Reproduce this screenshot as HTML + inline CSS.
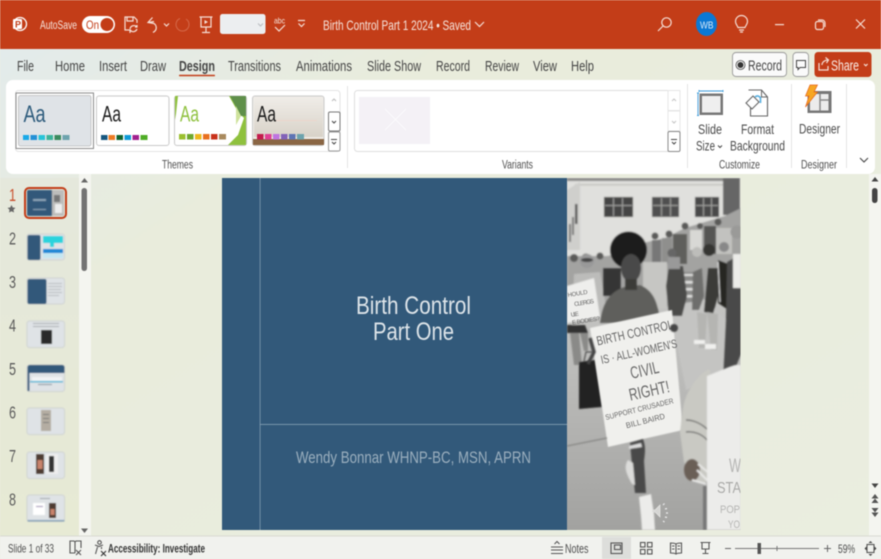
<!DOCTYPE html>
<html><head><meta charset="utf-8"><style>
html,body{margin:0;padding:0;width:881px;height:559px;overflow:hidden;background:#eceee2}
svg{display:block;filter:blur(.4px)}
svg svg{filter:none}
text{font-family:"Liberation Sans",sans-serif}
.tab{font-size:15px;fill:#444}
.lab{font-size:11.5px;fill:#4f4f4f}
.rb{font-size:14px;fill:#4a4a4a}
.n{font-size:17.500px;fill:#5a5a5a}
.w{fill:#f6e4dc}
.ic{fill:none;stroke:#f5ded5;stroke-width:1.2}
.gi{fill:none;stroke:#555;stroke-width:1.1}
.hw{font-family:"Liberation Sans",sans-serif;fill:#686868}
</style></head><body>
<svg width="881" height="559" viewBox="0 0 881 559" xmlns="http://www.w3.org/2000/svg">
<defs>
<linearGradient id="bg" x1="0" y1="0" x2="1" y2="1"><stop offset="0" stop-color="#e2ebee"/><stop offset=".3" stop-color="#e9ecdc"/><stop offset="1" stop-color="#eaeee0"/></linearGradient>
<linearGradient id="pg" x1="0" y1="0" x2="0" y2="1"><stop offset="0" stop-color="#e5e8dc"/><stop offset="1" stop-color="#e7ead4"/></linearGradient>
<linearGradient id="gr" x1="0" y1="0" x2="0" y2="1"><stop offset="0" stop-color="#d2d2cf"/><stop offset=".55" stop-color="#bcbcba"/><stop offset="1" stop-color="#a2a2a0"/></linearGradient>
<linearGradient id="wd" x1="0" y1="0" x2="0" y2="1"><stop offset="0" stop-color="#f0ede8"/><stop offset="1" stop-color="#d8d2c8"/></linearGradient>
<filter id="b1"><feGaussianBlur stdDeviation=".7"/></filter>
<filter id="b2"><feGaussianBlur stdDeviation="1.2"/></filter>
<filter id="b0"><feGaussianBlur stdDeviation=".5"/></filter>
</defs>

<rect width="881" height="559" fill="url(#bg)"/>
<rect x="0" y="178" width="79" height="358" fill="url(#pg)"/>
<rect x="79" y="174" width="12" height="362" fill="#f4f5f0"/>
<rect x="869" y="174" width="12" height="362" fill="#f4f5f0"/>

<!-- title bar -->
<rect width="881" height="49" fill="#c33d18"/>
<circle cx="20" cy="24" r="6.500" fill="none" stroke="#fff" stroke-width="1.300"/>
<rect x="13" y="19" width="9" height="10" rx="1" fill="#fff"/>
<text x="15" y="27.500" font-size="9" font-weight="700" fill="#c33d18">P</text>
<text x="40" y="29" font-size="11.500" class="w" textLength="37" lengthAdjust="spacingAndGlyphs">AutoSave</text>
<rect x="82" y="16" width="33" height="17" rx="8.500" fill="#fff"/>
<circle cx="107" cy="24.500" r="6.500" fill="#c33d18"/>
<text x="86" y="29" font-size="12" fill="#c33d18" textLength="13" lengthAdjust="spacingAndGlyphs">On</text>
<path class="ic" d="M131 30h-6v-13h9l3 3v3M127 17v4h6v-4"/>
<path class="ic" d="M130 29a4 4 0 0 1 7-2M137 29a4 4 0 0 1-6 2M137 25v2h-2M130 33v-2h2" stroke-width="1"/>
<path class="ic" d="M152.500 17.500l-4.500 5 6 1a5 5 0 0 1 1 7.500l-2 1.500M148 22.500l6-1" stroke-width="1.300"/>
<path class="ic" d="M164 23.500l2.500 2.500 2.500-2.500" stroke-width="1"/>
<path d="M180 18.500a6.500 6.500 0 1 0 6 .5" fill="none" stroke="#d5694a" stroke-width="1"/>
<path class="ic" d="M199.500 17h13M201 17v10h10V17M206 27v5M202 32.500h8"/>
<path d="M204.500 20l3.500 2-3.500 2z" fill="#f5ded5"/>
<rect x="220" y="14" width="45.500" height="20" rx="2.500" fill="#eceef0"/>
<path d="M258 23.500l2.500 2.500 2.500-2.500" fill="none" stroke="#b9bcc0" stroke-width="1"/>
<text x="274" y="23.500" font-size="8.500" class="w" textLength="11" lengthAdjust="spacingAndGlyphs">abc</text>
<path class="ic" d="M275 27l4 4 6-6" stroke-width="1"/>
<path class="ic" d="M298 20.500h7M298.500 23.500l3 3 3-3" stroke-width="1.100"/>
<text x="323" y="30" font-size="14" class="w" textLength="148" lengthAdjust="spacingAndGlyphs">Birth Control Part 1 2024 • Saved</text>
<path class="ic" d="M475 22l4.500 4.500 4.500-4.500" stroke-width="1.200"/>
<circle cx="666.500" cy="22.500" r="4.700" class="ic"/><path class="ic" d="M663 26l-5 5"/>
<ellipse cx="706.500" cy="24" rx="10.500" ry="12" fill="#0b78d4"/>
<text x="700" y="28.500" font-size="10.500" fill="#dcecf9" textLength="13.500" lengthAdjust="spacingAndGlyphs">WB</text>
<path class="ic" d="M738 27.500c-.5-2-2.500-3-2.500-6a6 6 0 0 1 12 0c0 3-2 4-2.500 6zM739 30h5M740 32h3"/>
<rect x="775" y="24" width="9" height="1.200" fill="#f5ded5"/>
<rect x="815.500" y="21.500" width="8" height="8" rx="2" class="ic"/><path class="ic" d="M818 20h4a3 3 0 0 1 3 3v4"/>
<path class="ic" d="M856 19.500l9 9M865 19.500l-9 9" stroke-width="1.300"/>

<!-- tabs -->
<text x="17" y="71" class="tab" textLength="17" lengthAdjust="spacingAndGlyphs">File</text>
<text x="55" y="71" class="tab" textLength="30" lengthAdjust="spacingAndGlyphs">Home</text>
<text x="99" y="71" class="tab" textLength="28" lengthAdjust="spacingAndGlyphs">Insert</text>
<text x="140" y="71" class="tab" textLength="26" lengthAdjust="spacingAndGlyphs">Draw</text>
<text x="179" y="71" class="tab" font-weight="700" textLength="36" lengthAdjust="spacingAndGlyphs">Design</text>
<rect x="179" y="74.800" width="36" height="1.500" rx=".7" fill="#c33d18"/>
<text x="228" y="71" class="tab" textLength="53" lengthAdjust="spacingAndGlyphs">Transitions</text>
<text x="296" y="71" class="tab" textLength="56" lengthAdjust="spacingAndGlyphs">Animations</text>
<text x="367" y="71" class="tab" textLength="54" lengthAdjust="spacingAndGlyphs">Slide Show</text>
<text x="436" y="71" class="tab" textLength="34" lengthAdjust="spacingAndGlyphs">Record</text>
<text x="485" y="71" class="tab" textLength="34" lengthAdjust="spacingAndGlyphs">Review</text>
<text x="533" y="71" class="tab" textLength="24" lengthAdjust="spacingAndGlyphs">View</text>
<text x="571" y="71" class="tab" textLength="23" lengthAdjust="spacingAndGlyphs">Help</text>

<rect x="732.500" y="52.500" width="54" height="24" rx="3.500" fill="#fafafa" stroke="#999" stroke-width=".9"/>
<circle cx="740.500" cy="65" r="4.500" fill="none" stroke="#444" stroke-width=".8"/><circle cx="740.500" cy="65" r="3" fill="#333"/>
<text x="748" y="70.500" class="tab" textLength="34" lengthAdjust="spacingAndGlyphs">Record</text>
<rect x="793" y="52.500" width="15.500" height="24" rx="3.500" fill="#fafafa" stroke="#999" stroke-width=".9"/>
<path d="M796.500 60.500h9v7h-5.500l-2 2v-2h-1.500z" fill="none" stroke="#444" stroke-width="1"/>
<rect x="814.500" y="52" width="57" height="25" rx="3.500" fill="#c33d18"/>
<path class="ic" d="M819 63v7h9v-4M822 65c0-3 3-5 6-5M825.500 57.500l3 2.500-2 3" stroke-width="1"/>
<text x="831" y="70.500" font-size="15" fill="#fbeee8" textLength="28" lengthAdjust="spacingAndGlyphs">Share</text>
<path class="ic" d="M864 64l1.800 1.800 1.800-1.800" stroke-width="1.100"/>

<!-- ribbon -->
<rect x="6" y="80" width="869" height="94" rx="7" fill="#fff"/>
<rect x="15.500" y="90.500" width="324.500" height="61" rx="3" fill="#fff" stroke="#e4e4e4"/>
<rect x="16" y="93" width="77.500" height="55.500" fill="#fff" stroke="#8a8a8a" stroke-width="1"/>
<rect x="18.500" y="95.500" width="72.500" height="50.500" rx="2" fill="#dfe3e7" stroke="#bbb" stroke-width=".8"/>
<text x="23.500" y="122" font-size="24" fill="#2d5b7c" textLength="22" lengthAdjust="spacingAndGlyphs">Aa</text>
<rect x="23" y="135" width="6" height="5" fill="#19a9e8"/><rect x="30.500" y="135" width="6.500" height="5" fill="#2390d6"/><rect x="38.500" y="135" width="6.500" height="5" fill="#27c4d8"/><rect x="46.500" y="135" width="6.500" height="5" fill="#3cb49a"/><rect x="54.500" y="135" width="6.500" height="5" fill="#3a8b5e"/><rect x="62.500" y="135" width="7" height="5" fill="#6da3ad"/>
<rect x="96.500" y="96" width="72.500" height="49.500" rx="2.500" fill="#fff" stroke="#c9c9c9"/>
<text x="102" y="121.500" font-size="22" fill="#1a1a1a" textLength="19" lengthAdjust="spacingAndGlyphs">Aa</text>
<rect x="101" y="135" width="6.500" height="5" fill="#17577f"/><rect x="108.500" y="135" width="6.500" height="5" fill="#ec7b24"/><rect x="116.500" y="135" width="6.500" height="5" fill="#12632f"/><rect x="124.500" y="135" width="6.500" height="5" fill="#0f9bd7"/><rect x="132.500" y="135" width="6.500" height="5" fill="#a1208e"/><rect x="140.500" y="135" width="7" height="5" fill="#4fad26"/>
<rect x="174.500" y="96" width="72" height="49.500" rx="2.500" fill="#fff" stroke="#c9c9c9"/>
<path d="M175 96h3l-2 18-1 6z" fill="#8fc13e"/>
<path d="M229 96h17v49h-18l10-10 6-17-6-6z" fill="#8fc13e"/>
<path d="M230 96h16v20h-5z" fill="#5f8f4a"/>
<path d="M236 125l5-9-5-10z" fill="#cfe39c"/>
<text x="180" y="121.500" font-size="22" fill="#8fc13e" textLength="19" lengthAdjust="spacingAndGlyphs">Aa</text>
<rect x="179" y="134" width="6.500" height="5.500" fill="#9bc02f"/><rect x="187" y="134" width="6.500" height="5.500" fill="#6fa82e"/><rect x="195" y="134" width="6.500" height="5.500" fill="#eeb81e"/><rect x="203" y="134" width="6.500" height="5.500" fill="#e8701f"/><rect x="211" y="134" width="6.500" height="5.500" fill="#c8321b"/><rect x="219" y="134" width="7" height="5.500" fill="#a98a5e"/>
<rect x="252.500" y="96" width="71.500" height="49.500" rx="2.500" fill="#efece7" stroke="#c9c9c9"/>
<rect x="254" y="97" width="69" height="40" fill="url(#wd)"/>
<rect x="253" y="139" width="71" height="6" fill="#8a6644"/>
<rect x="275" y="120" width="42" height="1" fill="#ecd5cb"/>
<text x="257" y="121.500" font-size="22" fill="#1a1a1a" textLength="19" lengthAdjust="spacingAndGlyphs">Aa</text>
<rect x="257" y="134" width="6.500" height="5.500" fill="#c31b4c"/><rect x="265" y="134" width="6.500" height="5.500" fill="#e03f93"/><rect x="273" y="134" width="6.500" height="5.500" fill="#bf74e0"/><rect x="281" y="134" width="6.500" height="5.500" fill="#8262b8"/><rect x="289" y="134" width="6.500" height="5.500" fill="#5e74b4"/><rect x="297" y="134" width="7" height="5.500" fill="#6da3ad"/>
<path d="M332 101l2-2 2 2" fill="none" stroke="#bbb"/>
<rect x="328.500" y="112" width="11.500" height="19" rx="1.500" fill="#fff" stroke="#777"/>
<path d="M332 121l2 2 2-2" fill="none" stroke="#444"/>
<rect x="328.500" y="132" width="11.500" height="19" rx="1.500" fill="#fff" stroke="#999"/>
<path d="M331 139.500h6M332 142l2 2 2-2" fill="none" stroke="#444"/>
<text x="162" y="168.500" class="lab" textLength="31" lengthAdjust="spacingAndGlyphs">Themes</text>
<rect x="347" y="86" width="1" height="82" fill="#e3e3e3"/>
<rect x="354.500" y="90.500" width="325.500" height="61" rx="3" fill="#fff" stroke="#dfdfdf"/>
<rect x="359" y="97" width="71" height="47" fill="#f4f1f6"/>
<path d="M385 109l21 21M406 109l-21 21" stroke="#fbfafc" stroke-width="1"/>
<rect x="668" y="90.500" width="12" height="20" fill="#fff" stroke="#e6e6e6"/>
<rect x="668" y="111" width="12" height="20" fill="#fff" stroke="#e6e6e6"/>
<rect x="668" y="131.500" width="12" height="20" rx="1.500" fill="#fff" stroke="#8a8a8a"/>
<path d="M672 101l2-2 2 2M672 121l2 2 2-2" fill="none" stroke="#c4c4c4"/>
<path d="M671 139.500h6M672 142l2 2 2-2" fill="none" stroke="#444"/>
<text x="502" y="168.500" class="lab" textLength="31" lengthAdjust="spacingAndGlyphs">Variants</text>
<rect x="687" y="84" width="1" height="84" fill="#e3e3e3"/>
<rect x="791" y="84" width="1" height="84" fill="#e3e3e3"/>
<rect x="846" y="84" width="1" height="84" fill="#e3e3e3"/>
<path d="M699 91h24M699 90v2M723 90v2M698 93v23M697 93h2M697 115.500h2" stroke="#3a9ad9" stroke-width=".9" fill="none"/>
<rect x="699.500" y="93.500" width="23.500" height="21.500" fill="#777"/>
<rect x="702" y="96" width="18.500" height="16.500" fill="#efefef"/>
<text x="698" y="134" class="rb" textLength="24" lengthAdjust="spacingAndGlyphs">Slide</text>
<text x="696" y="150.500" class="rb" textLength="19" lengthAdjust="spacingAndGlyphs">Size</text>
<path d="M718 145.500l2 2 2-2" fill="none" stroke="#444"/>
<path d="M748.500 90h13l6 7v19h-17v-8" fill="#fff" stroke="#666" stroke-width="1.100"/>
<path d="M761.500 90v7h6" fill="none" stroke="#666"/>
<path d="M746 103l7-7 6 6-7 7z" fill="#fff" stroke="#666" stroke-width="1.100"/>
<path d="M755 97c2-1.500 4-1.500 5.500 1v5" fill="none" stroke="#55aee0" stroke-width="1.600"/>
<text x="741" y="134" class="rb" textLength="33" lengthAdjust="spacingAndGlyphs">Format</text>
<text x="730" y="150.500" class="rb" textLength="55" lengthAdjust="spacingAndGlyphs">Background</text>
<rect x="807.500" y="91" width="24" height="22" fill="#777"/>
<rect x="810" y="94" width="18.500" height="16.500" fill="#ececec"/>
<path d="M820 94v16.500M820 100h8.500" stroke="#8a8a8a" fill="none" stroke-width="1.500"/>
<path d="M810 85h7.500l-3.500 7h3.500l-12 15 3.500-11h-3.500z" fill="#f6a623" stroke="#e8641b" stroke-width=".7"/>
<text x="799" y="133.500" class="rb" textLength="41" lengthAdjust="spacingAndGlyphs">Designer</text>
<text x="719" y="168.500" class="lab" textLength="41" lengthAdjust="spacingAndGlyphs">Customize</text>
<text x="801" y="168.500" class="lab" textLength="36" lengthAdjust="spacingAndGlyphs">Designer</text>
<path d="M860 158l4 4 4-4" fill="none" stroke="#444" stroke-width="1.100"/>

<!-- thumb panel -->
<text x="9" y="201" class="n" style="fill:#c9502e" textLength="7" lengthAdjust="spacingAndGlyphs">1</text>
<path d="M11.500 205l1.300 2.500 2.700.4-2 1.900.5 2.700-2.500-1.300-2.500 1.300.5-2.700-2-1.900 2.700-.4z" fill="#666"/>
<text x="9" y="244.500" class="n" textLength="7" lengthAdjust="spacingAndGlyphs">2</text><text x="9" y="288" class="n" textLength="7" lengthAdjust="spacingAndGlyphs">3</text><text x="9" y="331.500" class="n" textLength="7" lengthAdjust="spacingAndGlyphs">4</text><text x="9" y="375" class="n" textLength="7" lengthAdjust="spacingAndGlyphs">5</text><text x="9" y="418.500" class="n" textLength="7" lengthAdjust="spacingAndGlyphs">6</text><text x="9" y="462" class="n" textLength="7" lengthAdjust="spacingAndGlyphs">7</text><text x="9" y="505.500" class="n" textLength="7" lengthAdjust="spacingAndGlyphs">8</text>

<rect x="25" y="188" width="41" height="30" rx="4" fill="none" stroke="#c33d18" stroke-width="2"/>
<g filter="url(#b0)">
<rect x="27" y="190" width="37" height="26" rx="1.500" fill="#32597a"/>
<rect x="52" y="190" width="12" height="26" fill="#bdbdbb"/><rect x="54" y="195" width="6" height="7" fill="#777"/><rect x="55" y="204" width="7" height="9" fill="#eee"/>
<rect x="33" y="199" width="13" height="2" fill="#8fa6b8"/><rect x="33" y="209" width="13" height="1" fill="#8fa6b8"/>
<g stroke="#cfd3d2" stroke-width="1">
<rect x="27" y="234" width="37.500" height="26" rx="2.500" fill="#dfe3e6"/>
<rect x="27" y="278" width="37.500" height="26" rx="2.500" fill="#dfe3e6"/>
<rect x="27" y="321" width="37.500" height="26.500" rx="2.500" fill="#dfe3e6"/>
<rect x="27" y="365" width="37.500" height="26.500" rx="2.500" fill="#dfe3e6"/>
<rect x="27" y="408" width="37.500" height="26.500" rx="2.500" fill="#dfe3e6"/>
<rect x="27" y="452" width="37.500" height="26.500" rx="2.500" fill="#dfe3e6"/>
<rect x="27" y="495" width="37.500" height="26.500" rx="2.500" fill="#dfe3e6"/>
</g>
<rect x="27.500" y="235" width="13" height="25" rx="2" fill="#32597a"/>
<rect x="43" y="236" width="20" height="7" fill="#2bd3dd"/><rect x="50" y="243" width="4" height="4" fill="#2bd3dd"/><rect x="43" y="249" width="20" height="4" fill="#1f86d6"/><rect x="43" y="253" width="20" height="5" fill="#c3e6f2"/>
<rect x="27.500" y="279" width="19" height="25" rx="2" fill="#32597a"/>
<g fill="#b8bcc0"><rect x="48" y="283" width="14" height="1"/><rect x="48" y="286" width="14" height="1"/><rect x="48" y="289" width="13" height="1"/><rect x="48" y="292" width="14" height="1"/><rect x="48" y="295" width="11" height="1"/></g>
<rect x="41" y="330" width="11" height="14" fill="#2a2a2a"/><rect x="33" y="323" width="26" height="1" fill="#a8acb0"/><rect x="33" y="326" width="26" height="1" fill="#a8acb0"/>
<path d="M27.500 368a2.500 2.500 0 0 1 2.500-3h32a2.500 2.500 0 0 1 2.500 3v5h-37z" fill="#32597a"/>
<rect x="27.500" y="373" width="2" height="18" fill="#32597a"/>
<rect x="32" y="377" width="30" height="4" fill="#f1f3f4"/><rect x="30" y="381" width="33" height="1.500" fill="#45b5d6"/><rect x="38" y="384" width="14" height="1" fill="#7b8b9a"/>
<rect x="41" y="410" width="10" height="21" fill="#b4ada2"/><rect x="43" y="414" width="6" height="1" fill="#777"/><rect x="43" y="418" width="6" height="1" fill="#777"/><rect x="43" y="422" width="6" height="1" fill="#777"/>
<rect x="36" y="454" width="8" height="20" fill="#4d3a30"/><rect x="37.500" y="460" width="5" height="9" fill="#c9836c"/><rect x="46" y="454" width="12" height="20" fill="#eeeeee"/><rect x="49" y="456" width="5" height="16" fill="#333"/>
<rect x="33" y="503" width="12" height="12" fill="#fff"/><rect x="36" y="506" width="7" height="1" fill="#8a74a8"/><rect x="49" y="503" width="7" height="15" fill="#4d3a30"/><rect x="50.500" y="509" width="4" height="6" fill="#c9836c"/><rect x="40" y="498" width="10" height="1" fill="#9aa0a5"/><rect x="27.500" y="520" width="37" height="1.500" fill="#7f9db3"/>
</g>

<path d="M84.500 178l3.500 4.500h-7z" fill="#666"/>
<rect x="81.500" y="188" width="5.500" height="83" rx="2.700" fill="#737373"/>
<path d="M84.500 533l3.500-4.500h-7z" fill="#666"/>
<path d="M875 177l3.500 4.500h-7z" fill="#444"/>
<rect x="872" y="188" width="5.500" height="15" rx="2.700" fill="#444"/>
<path d="M875 488l3.500-4.500h-7z" fill="#444"/>
<path d="M875 494l3.500 4.500h-7zM875 498.500l3.500 4.500h-7z" fill="#555"/>
<path d="M875 517l3.500-4.500h-7zM875 512.500l3.500-4.500h-7z" fill="#555"/>

<!-- slide -->
<rect x="222" y="178" width="345" height="352" fill="#32597a"/>
<rect x="259.700" y="178" width=".8" height="352" fill="#7f9bb0"/>
<rect x="260" y="424" width="307" height=".8" fill="#8aa3b6"/>
<text x="356" y="314" font-size="25" fill="#dde4e9" textLength="115" lengthAdjust="spacingAndGlyphs">Birth Control</text>
<text x="373" y="340" font-size="25" fill="#dde4e9" textLength="81" lengthAdjust="spacingAndGlyphs">Part One</text>
<text x="296" y="463" font-size="16.500" fill="#9bafbe" textLength="235" lengthAdjust="spacingAndGlyphs">Wendy Bonnar WHNP-BC, MSN, APRN</text>

<!-- photo -->
<svg x="567" y="178" width="173.500" height="352" viewBox="567 178 173.500 352">
<rect x="567" y="178" width="174" height="352" fill="url(#gr)"/>
<g filter="url(#b1)">
<rect x="567" y="178" width="174" height="78" fill="#e0e0dd"/>
<rect x="567" y="178" width="156" height="3" fill="#8a8a88"/>
<rect x="575" y="184" width="148" height="1.500" fill="#c2c2bf"/>
<path d="M567 190l13-8v68h-13z" fill="#cfcfcc"/>
<rect x="569" y="224" width="2" height="18" fill="#777"/><rect x="572" y="217" width="2" height="18" fill="#777"/><rect x="575" y="204" width="2.500" height="20" fill="#555"/>
<rect x="723" y="178" width="17" height="37" fill="#666"/>
<rect x="604" y="197" width="29" height="20" fill="#444"/><rect x="652" y="197" width="27" height="20" fill="#4f4f4f"/><rect x="695" y="197" width="24" height="20" fill="#4a4a4a"/>
<g fill="#a5a5a3"><rect x="613" y="198" width="1" height="18"/><rect x="622" y="198" width="1" height="18"/><rect x="605" y="205" width="27" height="1"/><rect x="661" y="198" width="1" height="18"/><rect x="670" y="198" width="1" height="18"/><rect x="653" y="205" width="25" height="1"/><rect x="703" y="198" width="1" height="18"/><rect x="711" y="198" width="1" height="18"/><rect x="696" y="205" width="22" height="1"/></g>
<!-- crowd -->
<path d="M567 256h40l20-4 20-10 18-4 20-10 20-6 20-6 16-8v70l-30 20-50 10-60 0-34 0z" fill="#a3a3a1"/>
<g fill="#5a5a58"><circle cx="655" cy="236" r="3.500"/><circle cx="669" cy="234" r="3.500"/><circle cx="685" cy="226" r="3.500"/><circle cx="700" cy="226" r="3"/><circle cx="718" cy="222" r="3.500"/><circle cx="586" cy="258" r="4.500"/><circle cx="600" cy="256" r="3.500"/><circle cx="574" cy="258" r="4"/></g>
<rect x="652" y="240" width="9" height="24" fill="#777"/><rect x="662" y="238" width="10" height="26" fill="#8f8f8d"/><rect x="673" y="234" width="14" height="30" fill="#5e5e5c"/><rect x="690" y="230" width="12" height="20" fill="#d8d8d5"/><rect x="704" y="226" width="12" height="28" fill="#555553"/><rect x="716" y="228" width="16" height="26" fill="#c2c2bf"/>
<rect x="643" y="262" width="24" height="46" fill="#c6c6c3"/>
<!-- stairs and pavement -->
<path d="M678 272h22v30h-22z" fill="#8a8a88"/>
<g fill="#e0e0de"><rect x="680" y="274" width="18" height="2"/><rect x="680" y="281" width="20" height="2.500"/><rect x="680" y="288" width="22" height="2.500"/><rect x="680" y="295" width="22" height="2.500"/></g>
<path d="M676 306l30-6 30 30v40l-50 20-14-70z" fill="#c4c4c2"/>
<!-- people -->
<path d="M669 266h14l4 30-5 20h-13l-3-30z" fill="#4c4c4a"/><circle cx="672" cy="253" r="4.500" fill="#666"/><rect x="668" y="257" width="12" height="12" fill="#999"/>
<path d="M693 272l9-4 2 28-5 14h-7z" fill="#6e6e6c"/><circle cx="697" cy="252" r="5" fill="#bdbdba"/>
<path d="M708 268h12l-2 28-5 18-9-2z" fill="#3a3a38"/><circle cx="709" cy="250" r="6" fill="#343432"/>
<path d="M718 260l13 5-2 38-2 6-9-6z" fill="#252523"/><circle cx="724" cy="247" r="5" fill="#888"/><path d="M718 262l2 40" stroke="#eee" stroke-width="1"/>
<path d="M697 312l2 36 6 0 2-34zM707 312l4 38 6 0 1-36z" fill="#b5b5b2"/><rect x="694" y="340" width="11" height="4" fill="#f0f0ee"/><rect x="705" y="344" width="11" height="5" fill="#f0f0ee"/>
<path d="M727 262l14-8v100l-10 25-8-2 3-60z" fill="#4a4a48"/>
<rect x="733" y="254" width="8" height="34" fill="#ecece9"/>
<circle cx="737" cy="232" r="6.500" fill="#9a9a98"/>
<!-- left man -->
<circle cx="587" cy="261" r="7" fill="#999"/><ellipse cx="587" cy="260" rx="6" ry="2" fill="#444"/><path d="M574 274l26-2 8 46-36 8z" fill="#bcbcba"/>
<rect x="603" y="268" width="18" height="28" fill="#363634"/>
<path d="M567 286l27-8 6 39-33 6z" fill="#eeeeec"/>
<!-- woman -->
<path d="M600 323c2-18 8-30 24-36l16-2c14 6 18 18 20 37z" fill="#5e5e5c"/>
<circle cx="628.500" cy="250" r="18.500" fill="#1c1c1c"/>
<ellipse cx="631" cy="268" rx="10" ry="14" fill="#4a4a48"/>
<rect x="625" y="279" width="12" height="11" fill="#3a3a38"/>
<path d="M567 325h18l3 8h-21z" fill="#333"/>
<path d="M570 333h9l3 32h-8zM580 333h8v18h-4z" fill="#8a8a88"/>
<path d="M579 362l16-2 7 47-23 2z" fill="#222"/>
<path d="M584 361l2-9h11l2 7" fill="none" stroke="#333"/>
</g>
<path d="M590 328L672 310 683 430 608 447z" fill="#f0f0ed" filter="url(#b0)"/>
<g transform="translate(595 343) rotate(-12.500)">
<text class="hw" x="2" y="3" font-size="13" textLength="78" lengthAdjust="spacingAndGlyphs">BIRTH CONTROL</text>
<text class="hw" x="2" y="22" font-size="12" textLength="78" lengthAdjust="spacingAndGlyphs">IS · ALL-WOMEN'S</text>
<text class="hw" x="28" y="43" font-size="17" textLength="29" lengthAdjust="spacingAndGlyphs">CIVIL</text>
<text class="hw" x="22" y="64" font-size="17" textLength="41" lengthAdjust="spacingAndGlyphs">RIGHT!</text>
</g>
<g transform="translate(606 420) rotate(-14)">
<text class="hw" x="0" y="0" font-size="7.500" textLength="70" lengthAdjust="spacingAndGlyphs">SUPPORT CRUSADER</text>
<text class="hw" x="18" y="13" font-size="8" textLength="40" lengthAdjust="spacingAndGlyphs">BILL BAIRD</text>
</g>
<g transform="translate(568 297) rotate(-9)">
<text class="hw" x="0" y="0" font-size="6" textLength="20">HOULD</text>
<text class="hw" x="5" y="10" font-size="6" textLength="20">CLERGS</text>
<text class="hw" x="0" y="20" font-size="6" textLength="8">ULE</text>
<text class="hw" x="0" y="28" font-size="6" textLength="28">E BODIES?</text>
</g>
<g filter="url(#b1)">
<circle cx="674" cy="328" r="4" fill="#444"/>
<path d="M590 338l4 14-6 12" stroke="#444" stroke-width="3.500" fill="none"/>
<path d="M567 446l40-8" stroke="#7a7a78" stroke-width="1"/>
<path d="M689 412l18-12" stroke="#8a8a88" stroke-width="1"/>
<path d="M630 443l13-4c3 8 2 14 1 22l2 32h-11l-3-28z" fill="#4a4a48"/>
<path d="M629 446l12-3 1 4-13 2z" fill="#ddd"/>
<path d="M628 460c-4 6-3 12 4 24l3 1-2-22z" fill="#dcdcda"/>
<path d="M639 497l12-3 3 20 1 16h-13l-1-14z" fill="#ececea"/>
<path d="M707 370c-12 8-22 24-24 38l-3 24 4 30 10 16 8 6 8-4V370z" fill="#c9c9c3"/>
<path d="M686 420c8 0 16 4 22 10M686 432c8-1 16 2 21 8" stroke="#555" stroke-width="1.200" fill="none"/>
<ellipse cx="692" cy="470" rx="8" ry="11" fill="#6a5e56"/>
<path d="M692 480l14 4M697 470l12 12M698 464l12 10" stroke="#e8e8e6" stroke-width="2" fill="none"/>
<path d="M703 486h5v44h-5z" fill="#777"/>
<path d="M707 376l22-9 6-2h6v165h-34z" fill="#ececea"/>
</g>
<text x="729" y="472" font-size="19" style="fill:#b5b5b3" textLength="12" lengthAdjust="spacingAndGlyphs">W</text>
<text x="717" y="493" font-size="16" style="fill:#aaaaa8" textLength="24" lengthAdjust="spacingAndGlyphs">STA</text>
<text x="720" y="513" font-size="11" style="fill:#b5b5b3" textLength="20" lengthAdjust="spacingAndGlyphs">POP</text>
<text x="728" y="528" font-size="11" style="fill:#b5b5b3" textLength="12" lengthAdjust="spacingAndGlyphs">YO</text>
<path d="M652 510h3l5-5v12l-5-5h-3z" fill="#d6d6d4" stroke="#ececea" stroke-width=".6"/>
<path d="M663 505l1.500-1.500M665 509l2-.5M666 513h2M665 517l2 .5M663 521l1.500 1" stroke="#eee" stroke-width="1.200"/>
</svg>

<!-- status bar -->
<rect x="0" y="536" width="881" height="23" fill="#f1f2ee"/>
<rect x="0" y="535.500" width="881" height="1" fill="#d8dad2"/>
<text x="8" y="552.500" font-size="12" fill="#4f4f4f" textLength="46" lengthAdjust="spacingAndGlyphs">Slide 1 of 33</text>
<path d="M75 553h-5v-12h4l1 1 1-1h5v7M75 542v11" class="gi"/>
<path d="M76 550l5 5M81 550l-5 5" class="gi"/>
<circle cx="99.500" cy="542.500" r="1.800" class="gi"/>
<path d="M95 545l4 1.500 4-1.500M97.500 547l-2 7M101.500 547v2" class="gi"/>
<path d="M101 551l5 5M106 551l-5 5" stroke="#333" stroke-width="1.100"/>
<text x="108" y="552.500" font-size="11.500" font-weight="700" fill="#333" textLength="97" lengthAdjust="spacingAndGlyphs">Accessibility: Investigate</text>
<path d="M554.500 544l2.500-2.500 2.500 2.500M551 547h12M551 550h12M551 553.500h12" class="gi"/>
<text x="565" y="553" font-size="12.500" fill="#4f4f4f" textLength="23.500" lengthAdjust="spacingAndGlyphs">Notes</text>
<rect x="602" y="537" width="29" height="22" fill="#dddedb"/>
<rect x="611" y="543" width="11" height="10.500" class="gi"/><rect x="614.500" y="545" width="6" height="4.500" class="gi"/>
<g class="gi"><rect x="640.500" y="542.500" width="4.500" height="4.500"/><rect x="647.500" y="542.500" width="4.500" height="4.500"/><rect x="640.500" y="549.500" width="4.500" height="4.500"/><rect x="647.500" y="549.500" width="4.500" height="4.500"/></g>
<path d="M676 544c-1.500-1-3.500-1-5.500-1v10c2 0 4 0 5.500 1 1.500-1 3.500-1 5.500-1v-10c-2 0-4 0-5.500 1zM676 544v10M672 546h2.500M672 549h2.500M677.500 546h2.500M677.500 549h2.500" class="gi"/>
<path d="M700.500 542.500h10M702 542.500v6.500h7v-6.500M705.500 549v4M702.500 553.500h6" class="gi"/>
<rect x="725" y="548" width="6" height="1" fill="#666"/>
<rect x="735" y="548" width="84" height="1" fill="#777"/>
<rect x="776.500" y="546" width="1" height="5" fill="#777"/>
<rect x="757.500" y="543" width="3.500" height="11" fill="#555"/>
<path d="M824 548.500h7M827.500 545v7" stroke="#666" fill="none"/>
<text x="838" y="553" font-size="12" fill="#4f4f4f" textLength="17" lengthAdjust="spacingAndGlyphs">59%</text>
<rect x="867" y="544.500" width="7" height="8" class="gi"/>
<path d="M870.500 541l-2 2h4zM870.500 556l-2-2h4zM864.500 548.500l2-2v4zM876.500 548.500l-2-2v4z" fill="#444"/>
</svg>
</body></html>
